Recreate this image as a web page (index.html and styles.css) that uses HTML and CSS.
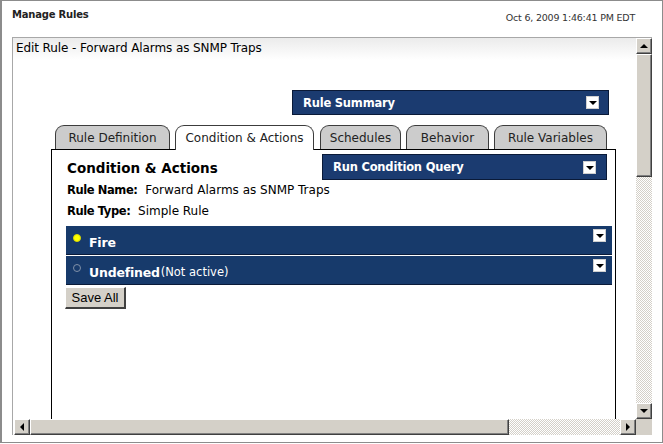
FILE: index.html
```html
<!DOCTYPE html>
<html>
<head>
<meta charset="utf-8">
<link rel="stylesheet" href="styles.css">
</head>
<body>
<div class="window">
  <div class="titlebar">
    <span class="title">Manage Rules</span>
    <span class="stamp">Oct 6, 2009 1:46:41 PM EDT</span>
  </div>
  <div class="frame">
    <div class="viewport">
      <div class="pagehead">Edit Rule - Forward Alarms as SNMP Traps</div>
      <div class="summary-row">
        <div class="bar bar-summary"><span>Rule Summary</span><i class="dd"></i></div>
      </div>
      <div class="tabset">
        <div class="tabs">
          <div class="tab t1">Rule Definition</div>
          <div class="tab t2 active">Condition &amp; Actions</div>
          <div class="tab t3">Schedules</div>
          <div class="tab t4">Behavior</div>
          <div class="tab t5">Rule Variables</div>
        </div>
        <div class="panel">
          <div class="panel-head">
            <h2 class="heading">Condition &amp; Actions</h2>
            <div class="bar bar-query"><span>Run Condition Query</span><i class="dd"></i></div>
          </div>
          <div class="field name"><b>Rule Name:</b>&nbsp; Forward Alarms as SNMP Traps</div>
          <div class="field type"><b>Rule Type:</b>&nbsp; Simple Rule</div>
          <div class="actions">
            <div class="action"><span class="dot on"></span><b>Fire</b><i class="dd"></i></div>
            <div class="action"><span class="dot off"></span><b>Undefined</b><span class="note">(Not active)</span><i class="dd"></i></div>
          </div>
          <button class="save">Save All</button>
        </div>
      </div>
    </div>
    <div class="vscroll">
      <div class="sbtn up"><i class="tri-up"></i></div>
      <div class="vthumb"></div>
      <div class="vtrack"></div>
      <div class="sbtn down"><i class="tri-down"></i></div>
    </div>
    <div class="hscroll">
      <div class="sbtn left"><i class="tri-left"></i></div>
      <div class="hthumb"></div>
      <div class="htrack"></div>
      <div class="sbtn right"><i class="tri-right"></i></div>
    </div>
    <div class="corner"></div>
  </div>
</div>
</body>
</html>
```

FILE: styles.css
```css
html, body {
  margin: 0;
  padding: 0;
  background: #ffffff;
}

.window {
  width: 663px;
  height: 443px;
  box-sizing: border-box;
  border: 1px solid #8c8c8c;
  border-left: 2px solid #8c8c8c;
  padding: 0 9px 0 10px;
  display: flex;
  flex-direction: column;
  font-family: "DejaVu Sans", Verdana, sans-serif;
  color: #000;
}

.titlebar {
  height: 36px;
  display: flex;
  justify-content: space-between;
  align-items: flex-start;
  padding-right: 18px;
}

.title {
  font-weight: bold;
  font-size: 10px;
  margin-top: 8px;
  color: #222;
  letter-spacing: -0.2px;
}

.stamp {
  font-size: 9.5px;
  margin-top: 11px;
  color: #333;
  letter-spacing: -0.2px;
}

.frame {
  width: 640px;
  height: 398px;
  box-sizing: border-box;
  border-top: 1px solid #a8a8a8;
  border-left: 1px solid #a8a8a8;
  display: grid;
  grid-template-columns: 1fr 16px;
  grid-template-rows: 1fr 16px;
}

.viewport {
  overflow: hidden;
  min-width: 0;
  min-height: 0;
}

.pagehead {
  height: 22px;
  line-height: 21px;
  padding-left: 3px;
  font-size: 12px;
  background: linear-gradient(#ebebeb, #ffffff);
  letter-spacing: -0.1px;
}

.summary-row {
  display: flex;
  justify-content: flex-end;
  padding-right: 27px;
  margin-top: 30px;
}

.bar {
  background: #1b3b70;
  color: #fff;
  font-weight: bold;
  font-size: 11.5px;
  letter-spacing: -0.2px;
  display: flex;
  align-items: center;
  justify-content: space-between;
  box-sizing: border-box;
  border: 1px solid #0a1a38;
}

.bar-summary {
  width: 317px;
  height: 25px;
  padding: 0 9px 0 10px;
}

.dd {
  width: 13px;
  height: 13px;
  background: #fff;
  box-sizing: border-box;
  border: 1px solid #d0d0d0;
  display: flex;
  align-items: center;
  justify-content: center;
  flex: none;
}

.dd::after {
  content: "";
  border-left: 4px solid transparent;
  border-right: 4px solid transparent;
  border-top: 4px solid #000;
  margin-top: 1px;
}

.tabset {
  margin-left: 38px;
  margin-top: 10px;
  width: 565px;
}

.tabs {
  display: flex;
  align-items: flex-end;
  padding-left: 4px;
  gap: 5px;
}

.tab {
  height: 24px;
  box-sizing: border-box;
  background: #cccccc;
  border: 1px solid #3c3c3c;
  border-bottom: none;
  border-radius: 9px 9px 0 0;
  font-size: 12px;
  color: #222;
  text-align: center;
  line-height: 22px;
  padding-top: 1px;
  flex: none;
}

.t1 { width: 115px; }
.t2 { width: 139px; }
.t3 { width: 81px; margin-left: 1px; }
.t4 { width: 83px; }
.t5 { width: 113px; }

.tab.active {
  background: #ffffff;
  height: 25px;
  margin-bottom: -1px;
  position: relative;
  z-index: 1;
}

.panel {
  border: 1px solid #000;
  height: 300px;
  background: #fff;
}

.panel-head {
  display: flex;
  justify-content: space-between;
  align-items: center;
  padding: 4px 8px 0 15px;
}

.heading {
  margin: 0;
  font-size: 13.5px;
  font-weight: bold;
  padding-top: 2px;
}

.bar-query {
  width: 285px;
  height: 26px;
  padding: 0 10px 0 10px;
}

.field {
  font-size: 12px;
  padding-left: 15px;
  height: 21px;
  line-height: 21px;
}

.field b {
  font-size: 11.5px;
  letter-spacing: -0.4px;
}

.actions {
  margin: 4px 3px 0 14px;
  display: flex;
  flex-direction: column;
  gap: 1px;
}

.action {
  background: #173a6b;
  color: #fff;
  height: 29px;
  box-sizing: border-box;
  border-bottom: 1px solid #0a1a38;
  display: flex;
  align-items: center;
  padding: 4px 6px 0 7px;
  font-size: 12px;
}

.action b {
  font-size: 12.5px;
  margin-left: 8px;
  letter-spacing: -0.2px;
}

.action .note {
  font-weight: normal;
  font-size: 11.5px;
  margin-left: 1px;
}

.action .dd {
  margin-left: auto;
  align-self: flex-start;
  margin-top: -1px;
}

.dot {
  width: 8px;
  height: 8px;
  border-radius: 50%;
  box-sizing: border-box;
  margin-top: -8px;
  flex: none;
}

.dot.on {
  background: #ffff00;
  border: 1px solid #d8d800;
}

.dot.off {
  border: 1px solid #8090a8;
  background: transparent;
}

.save {
  margin: 2px 0 0 13px;
  font-family: "Liberation Sans", Arial, sans-serif;
  font-size: 13px;
  background: #d4d0c8;
  color: #000;
  padding: 0 3px;
  height: 22px;
  width: 61px;
  border-style: solid;
  border-color: #ffffff #404040 #404040 #ffffff;
  border-width: 1px 2px 2px 1px;
}

/* scrollbars */
.vscroll {
  display: flex;
  flex-direction: column;
}

.hscroll {
  display: flex;
  flex-direction: row;
}

.sbtn {
  width: 16px;
  height: 16px;
  box-sizing: border-box;
  background: #d4d0c8;
  border-style: solid;
  border-width: 1px;
  border-color: #ffffff #404040 #404040 #ffffff;
  box-shadow: inset -1px -1px 0 #808080;
  display: flex;
  align-items: center;
  justify-content: center;
  flex: none;
}

.tri-up { border-left: 4px solid transparent; border-right: 4px solid transparent; border-bottom: 4px solid #000; }
.tri-down { border-left: 4px solid transparent; border-right: 4px solid transparent; border-top: 4px solid #000; }
.tri-left { border-top: 4px solid transparent; border-bottom: 4px solid transparent; border-right: 4px solid #000; }
.tri-right { border-top: 4px solid transparent; border-bottom: 4px solid transparent; border-left: 4px solid #000; }

.vthumb {
  height: 123px;
  box-sizing: border-box;
  background: #d4d0c8;
  border-style: solid;
  border-width: 1px;
  border-color: #ffffff #404040 #404040 #ffffff;
  box-shadow: inset -1px -1px 0 #808080;
  flex: none;
}

.vtrack, .htrack {
  flex: 1;
  background-color: #ffffff;
  background-image: repeating-conic-gradient(#d4d0c8 0 25%, #ffffff 0 50%);
  background-size: 2px 2px;
}

.hthumb {
  width: 479px;
  box-sizing: border-box;
  background: #d4d0c8;
  border-style: solid;
  border-width: 1px;
  border-color: #ffffff #404040 #404040 #ffffff;
  box-shadow: inset -1px -1px 0 #808080;
  flex: none;
}

.hscroll .sbtn.left { margin-left: 1px; }

.corner {
  background: #d4d0c8;
}
```
